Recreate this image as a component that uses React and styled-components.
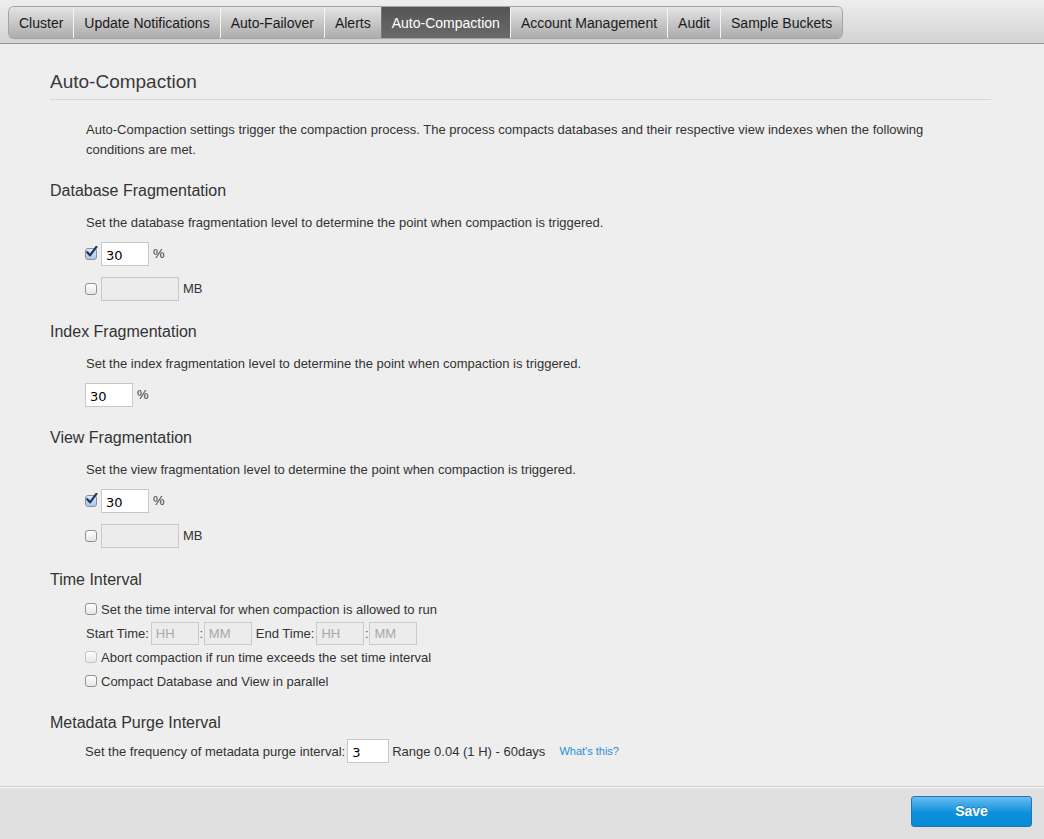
import React from 'react'
import styled, {createGlobalStyle, css} from 'styled-components'

const GlobalStyle = createGlobalStyle`
  html, body {
    margin: 0;
    padding: 0;
    background: #eeeeee;
  }
  body {
    font-family: "Liberation Sans", Arial, Helvetica, sans-serif;
    color: #333;
    font-size: 13px;
  }
`

const tabs = [
    'Cluster',
    'Update Notifications',
    'Auto-Failover',
    'Alerts',
    'Auto-Compaction',
    'Account Management',
    'Audit',
    'Sample Buckets',
]

export default function App() {
    return (
        <Page>
            <GlobalStyle />
            <TabBar>
                <Tabs>
                    {tabs.map(t => (
                        <Tab key={t} $active={t === 'Auto-Compaction'}>{t}</Tab>
                    ))}
                </Tabs>
            </TabBar>

            <Content>
                <Title>Auto-Compaction</Title>
                <Intro>
                    Auto-Compaction settings trigger the compaction process. The process compacts databases and their respective view indexes when the following conditions are met.
                </Intro>

                <Section>
                    <SectionTitle>Database Fragmentation</SectionTitle>
                    <SectionBody>
                        <Desc>Set the database fragmentation level to determine the point when compaction is triggered.</Desc>
                        <Row>
                            <Check checked />
                            <TextInput $w={48} defaultValue="30" />
                            <Unit>%</Unit>
                        </Row>
                        <Row>
                            <Check />
                            <TextInput $w={78} disabled />
                            <Unit>MB</Unit>
                        </Row>
                    </SectionBody>
                </Section>

                <Section>
                    <SectionTitle>Index Fragmentation</SectionTitle>
                    <SectionBody>
                        <Desc>Set the index fragmentation level to determine the point when compaction is triggered.</Desc>
                        <Row>
                            <TextInput $w={48} defaultValue="30" />
                            <Unit>%</Unit>
                        </Row>
                    </SectionBody>
                </Section>

                <Section>
                    <SectionTitle>View Fragmentation</SectionTitle>
                    <SectionBody>
                        <Desc>Set the view fragmentation level to determine the point when compaction is triggered.</Desc>
                        <Row>
                            <Check checked />
                            <TextInput $w={48} defaultValue="30" />
                            <Unit>%</Unit>
                        </Row>
                        <Row>
                            <Check />
                            <TextInput $w={78} disabled />
                            <Unit>MB</Unit>
                        </Row>
                    </SectionBody>
                </Section>

                <Section $space={22}>
                    <SectionTitle>Time Interval</SectionTitle>
                    <SectionBody $tight>
                        <CheckRow>
                            <Check />
                            Set the time interval for when compaction is allowed to run
                        </CheckRow>
                        <CheckRow $text>
                            <Label>Start Time:</Label>
                            <TimeInput placeholder="HH" disabled />
                            <Colon>:</Colon>
                            <TimeInput placeholder="MM" disabled />
                            <Label $gap>End Time:</Label>
                            <TimeInput placeholder="HH" disabled />
                            <Colon>:</Colon>
                            <TimeInput placeholder="MM" disabled />
                        </CheckRow>
                        <CheckRow>
                            <Check disabled />
                            Abort compaction if run time exceeds the set time interval
                        </CheckRow>
                        <CheckRow>
                            <Check />
                            Compact Database and View in parallel
                        </CheckRow>
                    </SectionBody>
                </Section>

                <Section $space={20}>
                    <SectionTitle>Metadata Purge Interval</SectionTitle>
                    <SectionBody $tight $purge>
                        <Row>
                            <Label>Set the frequency of metadata purge interval:</Label>
                            <TextInput $w={42} defaultValue="3" />
                            <Label $pad>Range 0.04 (1 H) - 60days</Label>
                            <Help href="#">What's this?</Help>
                        </Row>
                    </SectionBody>
                </Section>
            </Content>

            <Footer>
                <SaveButton>Save</SaveButton>
            </Footer>
        </Page>
    )
}

function Check({checked, disabled}) {
    return (
        <Box $checked={checked} $disabled={disabled}>
            {checked && (
                <svg width="13" height="13" viewBox="0 0 13 13">
                    <path d="M2.3 6.2 L5 9.4 L11.4 0.8" fill="none" stroke="#1f3560" strokeWidth="2.2" strokeLinecap="round" strokeLinejoin="round" />
                </svg>
            )}
        </Box>
    )
}

const Page = styled.div`
    width: 100%;
    min-height: 839px;
    display: flex;
    flex-direction: column;
`

const TabBar = styled.div`
    border-bottom: 1px solid #8d949e;
    background: linear-gradient(#eeeeee, #d3d3d3);
    padding: 7px 0 0 9px;
    box-sizing: border-box;
    height: 44px;
`

const Tabs = styled.div`
    display: inline-flex;
    height: 31px;
    border-radius: 5px;
    overflow: hidden;
    box-shadow: 0 0 0 1px #a4a4a4, 0 1px 1px rgba(0,0,0,0.15);
`

const Tab = styled.div`
    display: flex;
    align-items: center;
    padding: 0 10px;
    font-size: 14px;
    color: #1a1a1a;
    background: linear-gradient(#e4e4e4, #acacac);
    border-left: 1px solid #f4f4f4;
    white-space: nowrap;
    &:first-child {
        border-left: none;
    }
    ${p => p.$active && css`
        background: linear-gradient(#545454, #6a6a6a);
        color: #fff;
        border-left-color: #777;
    `}
`

const Content = styled.div`
    flex: 1;
    padding: 26px 53px 22px 50px;
`

const Title = styled.h1`
    margin: 0;
    font-size: 19px;
    line-height: 23px;
    font-weight: normal;
    color: #3a3a3a;
    padding-bottom: 6px;
    border-bottom: 1px solid #d6d6d6;
`

const Intro = styled.p`
    margin: 20px 0 0 36px;
    line-height: 20px;
    padding-right: 60px;
`

const Section = styled.div`
    margin-top: ${p => p.$space || 21}px;
`

const SectionTitle = styled.h2`
    margin: 0;
    font-size: 16px;
    line-height: 20px;
    font-weight: normal;
    color: #333;
`

const SectionBody = styled.div`
    padding-left: 35px;
    margin-top: ${p => (p.$purge ? '6px' : p.$tight ? '7px' : '12px')};
    display: flex;
    flex-direction: column;
    gap: ${p => (p.$tight ? '0' : '11px')};
`

const Desc = styled.div`
    line-height: 20px;
    padding-left: 1px;
    margin-bottom: -2px;
`

const Row = styled.div`
    display: flex;
    align-items: center;
    height: 24px;
`

const CheckRow = styled.div`
    display: flex;
    align-items: center;
    height: 24px;
    padding-left: ${p => (p.$text ? '1px' : '0')};
`

const Box = styled.span`
    width: 10px;
    height: 10px;
    border: 1px solid ${p => (p.$disabled ? '#c4c4c4' : '#8f8f8f')};
    border-radius: 3px;
    background: ${p => (p.$checked ? 'linear-gradient(#d9e9fa, #a9c9ec)' : 'linear-gradient(#ffffff, #e6e6e6)')};
    margin-right: 4px;
    position: relative;
    flex-shrink: 0;
    svg {
        position: absolute;
        left: -1px;
        top: -3px;
    }
`

const TextInput = styled.input`
    box-sizing: border-box;
    width: ${p => p.$w}px;
    height: 24px;
    border: 1px solid #c8c8c8;
    background: ${p => (p.disabled ? '#ececec' : '#fff')};
    padding: 2px 4px 0;
    font-family: "DejaVu Sans", "Liberation Sans", sans-serif;
    font-size: 13px;
    color: #000;
    outline: none;
    margin: 0;
`

const TimeInput = styled.input`
    box-sizing: border-box;
    width: 48px;
    height: 23px;
    border: 1px solid #cbcbcb;
    background: #ececec;
    padding: 1px 4px 0;
    font-family: "Liberation Sans", Arial, sans-serif;
    font-size: 13px;
    margin: 0;
    &::placeholder {
        color: #a9a9a9;
    }
`

const Colon = styled.span`
    width: 5px;
    text-align: center;
    color: #555;
`

const Unit = styled.span`
    margin-left: 4px;
    margin-bottom: 2px;
`

const Label = styled.span`
    margin-left: ${p => (p.$gap ? '4px' : '0')};
    margin-right: ${p => (p.$pad ? '0' : '2px')};
    padding-left: ${p => (p.$pad ? '3px' : '0')};
    white-space: nowrap;
`

const Help = styled.a`
    margin-left: 14px;
    font-size: 11px;
    color: #1f8ed8;
    text-decoration: none;
`

const Footer = styled.div`
    border-top: 1px solid #cdcdcd;
    box-shadow: inset 0 1px 0 #fbfbfb;
    background: #dfe0df;
    height: 53px;
    box-sizing: border-box;
    padding: 9px 12px 0 0;
    display: flex;
    justify-content: flex-end;
    align-items: flex-start;
`

const SaveButton = styled.button`
    width: 121px;
    height: 31px;
    padding: 0 0 2px;
    border: 1px solid #1f77b9;
    border-radius: 3px;
    background: linear-gradient(#69bdf0, #0b8fdc 55%, #078bd8);
    color: #fff;
    font-family: "Liberation Sans", Arial, sans-serif;
    font-weight: bold;
    font-size: 14px;
    text-shadow: 0 -1px 0 rgba(0,0,0,0.2);
    cursor: pointer;
`
